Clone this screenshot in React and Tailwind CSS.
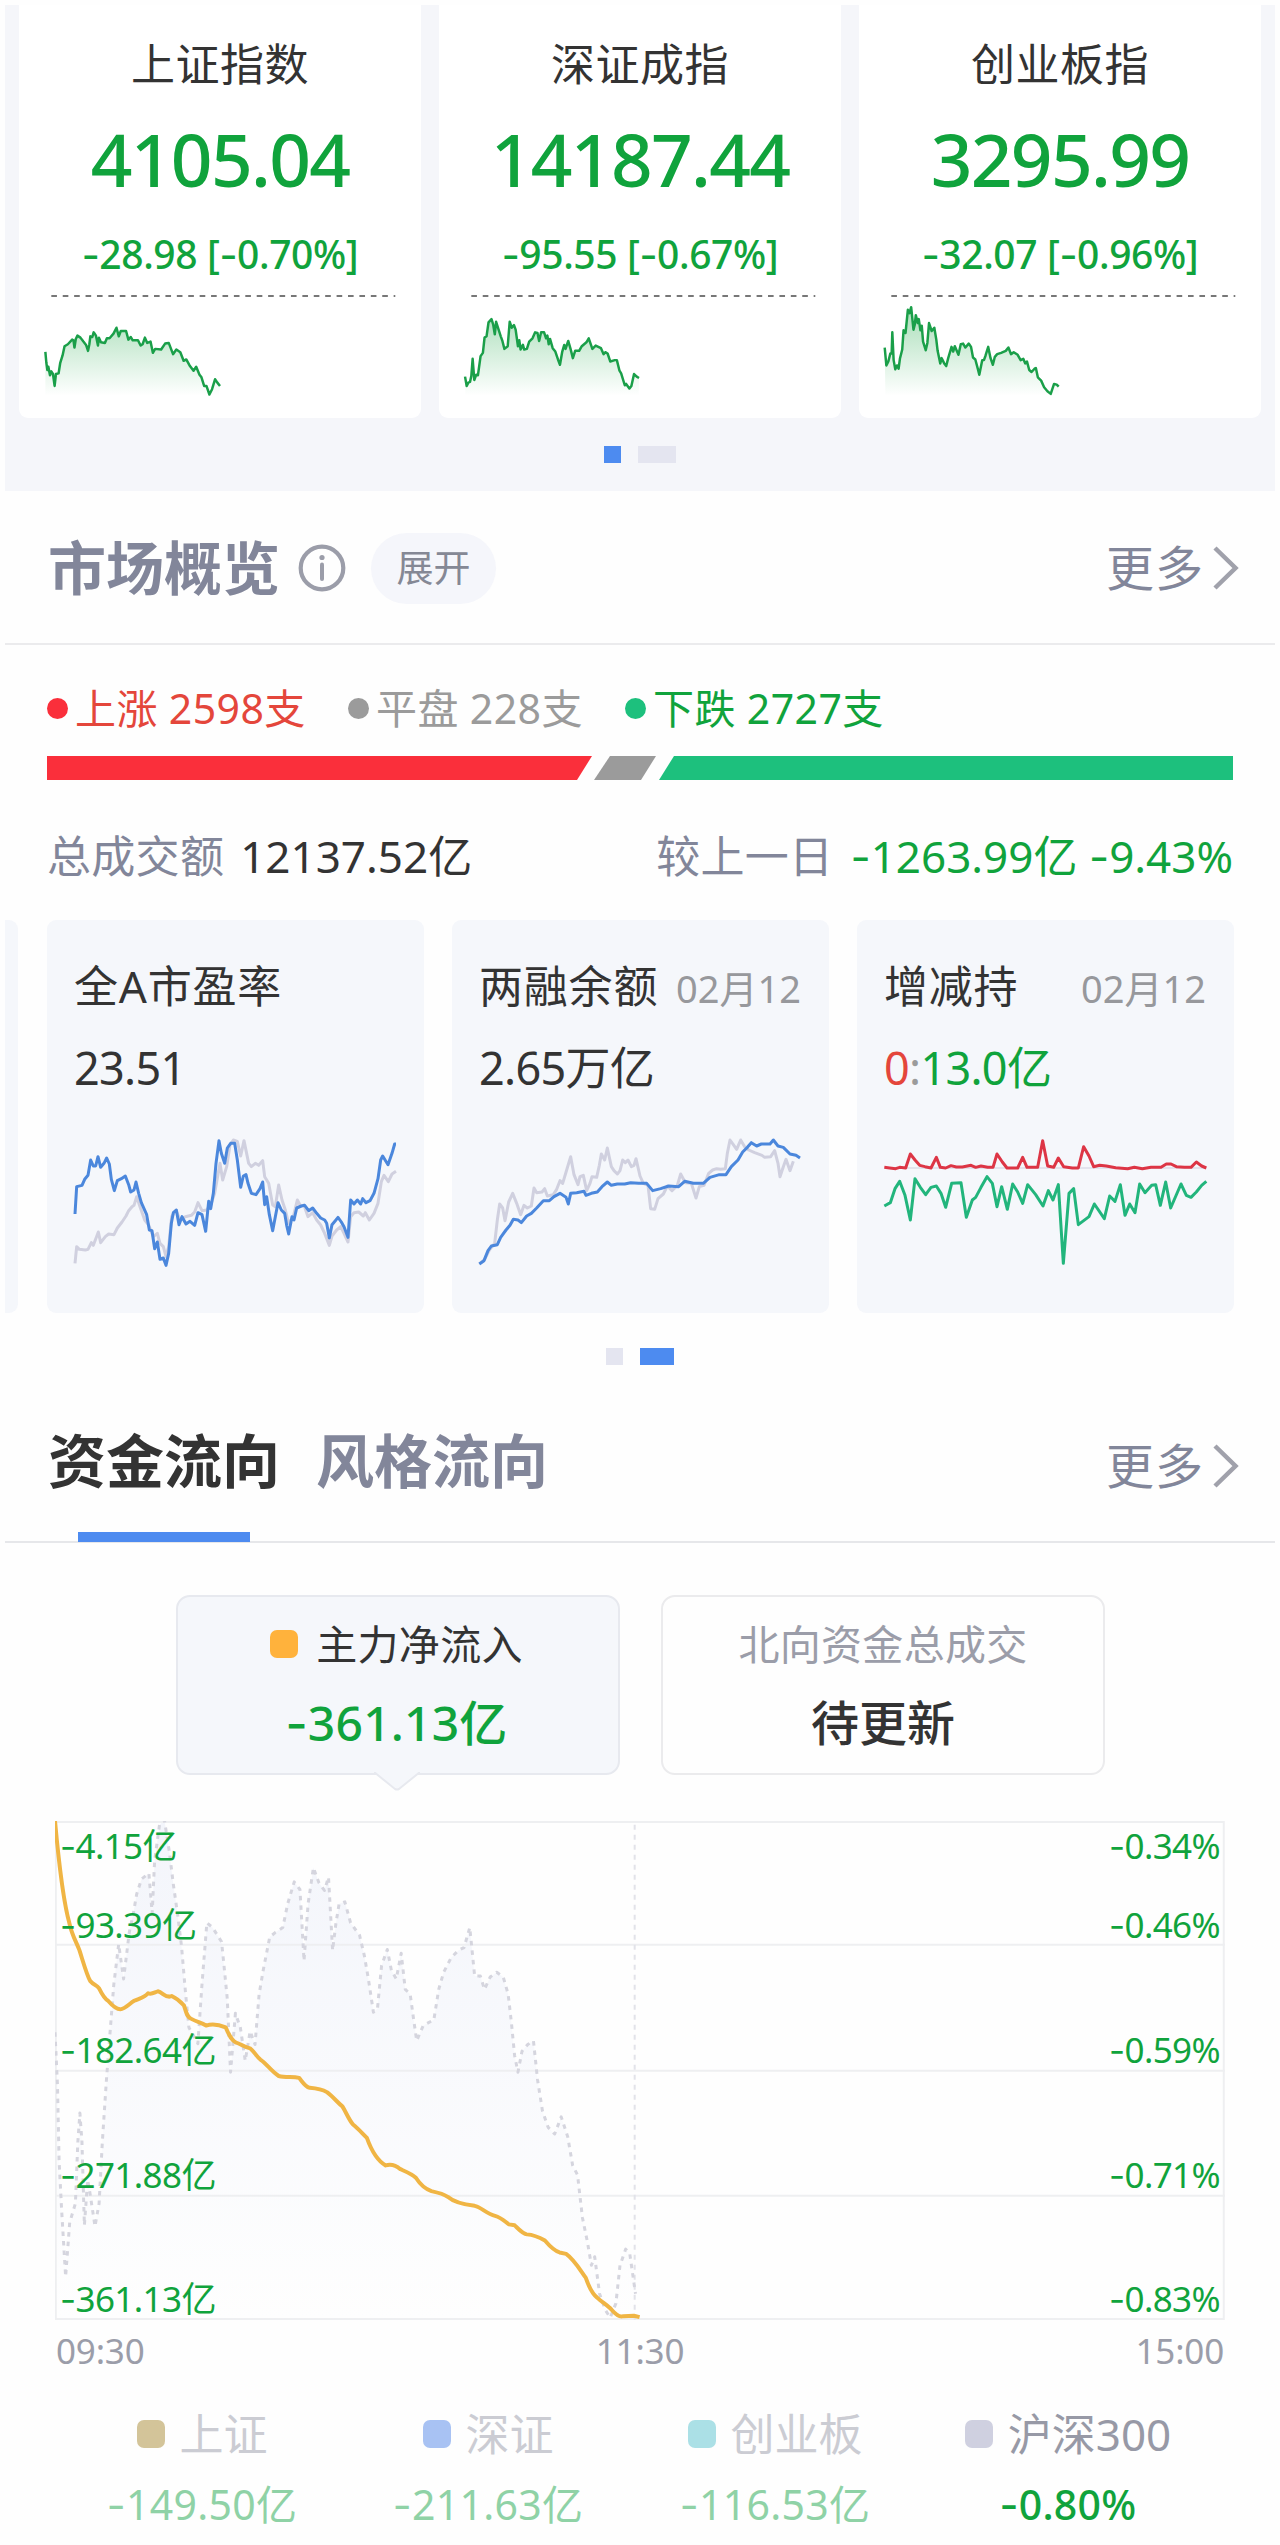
import React from 'react';

const INDEXES = [
  {
    name: '上证指数',
    price: '4105.04',
    change: '-28.98 [-0.70%]',
    line: '132,1057 135,1090 138,1112 141,1102 146,1128 150,1116 155,1124 160,1160 164,1124 172,1122 177,1090 184,1068 190,1040 200,1034 213,1020 217,1022 220,1044 224,1018 229,1008 238,1014 247,1026 255,1036 261,1054 265,1034 268,1010 274,1012 278,998 285,1008 291,1038 294,1014 300,1028 312,1030 318,1016 326,1016 338,1002 347,984 354,1010 360,994 376,994 383,1020 390,1012 396,1022 412,1022 420,1038 426,1034 433,1014 440,1030 450,1026 457,1060 464,1048 482,1050 494,1032 505,1030 518,1064 528,1050 540,1058 550,1084 558,1080 568,1098 580,1114 588,1102 598,1126 604,1134 612,1160 619,1160 628,1186 636,1170 645,1140 652,1150 660,1160',
  },
  {
    name: '深证成指',
    price: '14187.44',
    change: '-95.55 [-0.67%]',
    line: '131,1132 136,1160 141,1150 146,1148 150,1130 154,1078 159,1142 165,1126 170,1128 178,1070 185,1060 190,1014 196,1010 202,968 211,958 216,974 221,1004 225,966 232,988 239,1010 244,1024 250,1048 260,1040 266,966 272,984 279,976 284,990 291,1040 295,1022 299,1050 306,1036 310,1050 318,1048 325,1026 335,1016 343,998 350,1000 355,1024 361,998 370,998 376,1016 380,1008 384,1034 388,1018 396,1046 404,1056 412,1080 418,1096 425,1056 431,1036 435,1048 443,1024 450,1048 457,1076 464,1054 476,1054 484,1040 498,1028 505,1016 516,1048 526,1038 542,1046 550,1064 555,1058 562,1062 570,1086 584,1082 590,1082 598,1114 603,1122 614,1158 618,1154 628,1168 634,1160 642,1124 650,1132 657,1136',
  },
  {
    name: '创业板指',
    price: '3295.99',
    change: '-32.07 [-0.96%]',
    line: '130,1044 135,1098 141,1086 147,1062 151,1062 153,998 157,1082 162,1110 167,1098 172,1108 176,1078 183,1050 187,992 193,1000 200,930 205,940 210,922 217,990 221,974 224,946 230,970 233,958 238,992 242,978 246,1026 254,1052 259,1030 264,970 272,994 280,984 286,1020 290,1054 298,1092 302,1076 310,1092 316,1100 322,1076 332,1042 337,1056 342,1040 353,1066 360,1034 367,1032 374,1044 384,1032 391,1042 397,1074 404,1080 412,1110 416,1126 425,1082 430,1082 435,1068 443,1042 450,1076 457,1096 463,1072 470,1064 482,1060 496,1054 504,1044 512,1064 520,1058 532,1066 541,1082 549,1078 555,1092 560,1086 567,1112 574,1118 583,1108 587,1106 593,1134 603,1144 612,1164 622,1176 632,1184 642,1154 650,1156 656,1162',
  },
];

const PE_GRAY =
  '225,1090 230,1040 238,1048 256,1050 264,1048 274,1028 280,1036 295,996 302,1028 316,1010 326,1002 342,1004 352,984 366,966 378,948 386,932 396,920 402,916 410,890 420,920 434,960 446,975 460,1010 472,1000 480,1030 490,1040 498,1070 506,1040 515,950 528,930 540,960 556,950 574,946 584,936 594,908 606,932 620,930 632,915 644,880 652,835 660,790 668,840 680,800 690,735 700,720 712,724 722,768 732,722 746,790 754,800 766,790 776,796 788,782 794,830 806,850 818,915 826,920 836,855 846,900 856,930 866,970 880,950 892,900 902,918 912,916 924,950 938,938 950,960 962,975 974,1000 988,1036 996,1008 1010,990 1022,980 1032,1000 1044,1026 1052,950 1062,938 1076,936 1090,948 1096,938 1108,960 1122,940 1134,910 1144,845 1152,826 1165,845 1176,822 1188,814';
const PE_BLUE =
  '225,942 230,860 246,856 254,838 264,826 272,780 280,798 287,798 294,770 302,802 312,790 320,774 328,792 334,838 343,872 352,842 364,836 376,828 386,854 392,876 402,870 408,846 416,880 424,908 440,944 448,990 456,992 464,1046 472,1026 480,1078 490,1074 498,1096 506,1060 514,970 520,938 529,930 537,974 546,950 558,972 570,964 584,976 594,938 606,944 617,994 626,904 632,926 640,880 648,790 657,722 664,760 674,790 682,744 692,730 704,730 712,780 722,862 730,828 738,824 744,850 754,880 768,884 780,866 788,846 794,914 800,890 808,944 818,992 826,950 834,908 844,930 854,940 860,976 866,1002 876,950 882,960 890,924 904,918 914,916 926,932 938,924 950,940 962,954 974,960 980,970 988,1014 996,974 1006,962 1014,952 1024,966 1032,980 1044,1012 1052,900 1062,912 1072,900 1082,912 1088,896 1098,908 1110,902 1122,880 1134,836 1142,780 1148,768 1164,794 1176,760 1184,732 1188,732';
const MARGIN_GRAY =
  '148,1092 164,1078 178,1050 194,1030 202,960 209,912 218,924 225,962 236,906 248,880 260,910 272,944 282,916 292,924 304,918 312,864 320,878 336,876 344,866 352,888 370,884 380,868 390,842 398,850 410,810 422,770 432,824 444,854 450,830 460,826 470,872 480,850 486,830 500,832 508,796 514,762 524,780 532,744 544,800 552,812 562,822 570,812 578,780 586,788 594,780 604,800 612,796 618,776 630,828 640,850 654,856 662,926 674,928 684,896 700,882 712,858 726,872 742,856 752,822 766,848 784,850 798,894 808,860 822,856 836,820 848,810 860,806 872,808 886,806 892,760 900,720 910,734 920,748 932,720 944,740 956,750 974,758 996,766 1004,772 1022,770 1034,752 1044,790 1050,830 1060,800 1068,778 1080,812 1090,784';
const MARGIN_BLUE =
  '148,1092 162,1082 174,1052 184,1038 202,1034 212,1012 228,990 240,976 250,958 264,960 274,968 290,948 304,940 320,924 340,902 358,902 372,890 390,880 408,892 415,912 422,880 440,878 462,874 468,886 484,880 502,876 516,860 532,846 544,856 562,852 584,852 602,848 626,850 650,850 668,872 692,866 716,858 746,860 764,844 790,850 820,850 840,832 868,824 888,824 904,800 924,780 938,756 952,742 964,728 980,738 994,732 1020,732 1030,720 1044,738 1060,742 1080,762 1098,766 1110,774';
const HOLD_RED =
  '130,802 146,804 164,806 176,802 194,804 208,762 222,780 236,796 252,800 270,804 286,772 298,802 314,804 330,797 346,801 364,801 390,796 404,802 420,798 440,802 456,802 468,762 484,786 498,804 530,804 545,772 558,802 590,802 605,722 620,798 638,802 652,774 668,800 694,804 712,804 728,740 744,768 758,800 776,796 796,798 824,803 860,806 880,802 904,806 930,802 960,802 976,792 990,792 1006,800 1030,802 1050,802 1066,786 1082,798 1096,804';
const HOLD_GREEN =
  '130,918 148,908 162,866 176,844 192,886 208,960 222,836 238,862 254,884 270,862 286,858 300,880 314,922 332,850 360,848 376,952 394,900 404,892 420,862 438,830 454,850 468,920 482,860 499,928 515,852 530,876 545,910 560,854 584,884 606,918 622,872 636,900 652,854 667,1090 684,880 698,866 712,974 744,950 760,912 790,956 806,888 822,904 838,854 852,946 866,912 882,938 896,852 912,878 932,856 944,854 958,916 974,846 989,924 1020,852 1036,886 1050,892 1066,876 1082,856 1096,844';

const FLOW_LINE =
  'M62,46 C72,140 84,220 97,260 C103,285 114,300 122,318 C132,345 140,370 148,382 C158,392 164,390 170,398 C178,412 184,420 192,424 C202,434 212,442 222,442 C234,441 244,430 256,424 C268,419 280,418 290,408 C298,412 306,406 314,404 C326,406 334,420 348,414 C358,418 370,426 378,434 C384,450 386,460 396,462 C408,468 420,470 432,476 C446,472 464,474 480,480 C488,494 492,506 506,512 C516,514 526,522 540,524 C550,530 556,542 566,548 C580,556 592,572 610,582 C626,586 644,583 660,586 C668,594 674,604 686,607 C700,608 716,610 728,616 C744,626 754,638 766,646 C776,660 782,674 792,684 C804,692 814,702 826,712 C836,736 848,758 872,770 C888,766 900,772 908,778 C924,784 936,788 946,796 C958,812 970,820 984,824 C1000,827 1014,830 1024,836 C1040,848 1060,852 1090,855 C1106,858 1120,872 1140,876 C1156,880 1164,888 1174,894 L1188,896 C1200,906 1208,914 1218,915 C1236,916 1250,922 1262,928 C1276,942 1286,950 1298,953 L1314,956 C1334,968 1350,992 1362,1006 C1370,1026 1378,1040 1390,1048 C1402,1058 1416,1064 1426,1074 C1436,1084 1444,1090 1454,1087 L1480,1086 L1494,1089';
const HS300 =
  '62,490 68,600 72,760 78,860 88,1004 98,890 112,850 118,720 123,660 128,720 134,896 142,800 148,830 160,898 170,850 178,720 188,590 196,500 206,390 218,305 230,378 244,280 254,240 262,200 274,168 292,156 300,240 306,130 318,54 330,44 342,110 352,180 362,240 372,310 382,410 390,480 412,514 422,390 434,260 448,270 470,300 476,350 484,420 492,574 504,450 516,480 528,550 540,488 552,516 562,410 572,360 588,290 602,280 620,270 632,220 648,174 662,190 672,340 682,220 695,144 708,175 722,192 732,164 742,318 750,262 758,220 772,216 786,260 808,286 820,330 830,380 842,448 852,440 862,350 876,316 886,360 898,378 910,324 920,400 932,410 940,460 948,508 964,476 990,464 1002,400 1014,364 1032,334 1050,318 1064,312 1078,270 1090,372 1104,372 1114,400 1128,374 1144,364 1160,374 1172,410 1180,470 1188,540 1196,574 1206,530 1220,516 1234,508 1244,590 1256,655 1270,690 1286,704 1302,668 1318,710 1330,770 1342,790 1354,880 1366,930 1376,980 1384,962 1396,1040 1410,1074 1422,1090 1436,1060 1446,980 1460,946 1470,956 1484,1040';

const AXIS_TICKS = [
  { flow: '-4.15亿', pct: '-0.34%', pos: 'pt-[1px]' },
  { flow: '-93.39亿', pct: '-0.46%', pos: 'mt-[32px]' },
  { flow: '-182.64亿', pct: '-0.59%', pos: 'mt-[77px]' },
  { flow: '-271.88亿', pct: '-0.71%', pos: 'mt-[77px]' },
  { flow: '-361.13亿', pct: '-0.83%', pos: 'mt-[76px]' },
];

const SERIES = [
  { name: '上证', value: '-149.50亿', swatch: 'bg-[#d3c499]', off: true },
  { name: '深证', value: '-211.63亿', swatch: 'bg-[#a8c2f3]', off: true },
  { name: '创业板', value: '-116.53亿', swatch: 'bg-[#abe0e6]', off: true },
  { name: '沪深300', value: '-0.80%', swatch: 'bg-[#cfd0e0]', off: false },
];

// Noto's hyphen is too short for a minus sign, Inter's has the right width
function Num({ children }) {
  return (
    <span>
      {children.split(/(-)/).map((part, i) =>
        part === '-' ? (
          <span key={i} className="font-['Inter']">-</span>
        ) : (
          part
        )
      )}
    </span>
  );
}

function Chevron() {
  return (
    <svg width="26" height="44" viewBox="0 0 26 44" fill="none" stroke="#a0a1ab" strokeWidth="4.5">
      <path d="M2 2 L22.5 22 L2 42" />
    </svg>
  );
}

function More() {
  return (
    <div className="flex items-center gap-[9px] text-[48px] leading-[60px] tracking-[1px] text-[#82869a]">
      更多
      <Chevron />
    </div>
  );
}

function IndexCard({ item, id }) {
  return (
    <div className="flex h-[413px] w-[402px] flex-col items-center rounded-b-[9px] bg-white pt-[29px] text-[#10a33c]">
      <div className="h-[60px] text-[44px] leading-[60px] tracking-[0.5px] text-[#333]">{item.name}</div>
      <div className="mt-[25px] h-[80px] text-[73px] font-medium leading-[80px] tracking-[-1.7px]">{item.price}</div>
      <div className="mt-[27px] h-[56px] whitespace-pre text-[39px] font-medium leading-[56px] tracking-[-0.4px]">
        <Num>{item.change}</Num>
      </div>
      <svg className="mt-[8px]" width="402" height="129" viewBox="57 870 1206 387" fill="none">
        <defs>
          <linearGradient id={id} gradientUnits="userSpaceOnUse" x1="0" y1="940" x2="0" y2="1190">
            <stop offset="0" stopColor="#10a33c" stopOpacity="0.34" />
            <stop offset="1" stopColor="#10a33c" stopOpacity="0" />
          </linearGradient>
        </defs>
        <path d="M150 888 H1190" stroke="#777" strokeWidth="6" strokeDasharray="17 17.5" />
        <polygon points={`132,1190 ${item.line} 656,1190`} fill={`url(#${id})`} />
        <polyline points={item.line} stroke="#1a9f49" strokeWidth="7.5" strokeLinejoin="round" />
      </svg>
    </div>
  );
}

function StatCard({ title, date, children, chart, viewBox }) {
  return (
    <div className="flex h-[393px] w-[377px] shrink-0 flex-col rounded-[9px] bg-[#f5f7fb] pt-[36px]">
      <div className="flex h-[60px] items-center justify-between whitespace-nowrap pl-[27px] pr-[28px] text-[#333]">
        <span className="text-[44px] leading-[60px] tracking-[0.8px]">{title}</span>
        <span className="mt-[4px] text-[38px] leading-[54px] text-[#97989c]">{date}</span>
      </div>
      <div className="mt-[22px] h-[60px] whitespace-nowrap pl-[27px] text-[45px] leading-[60px] tracking-[-0.7px] text-[#333]">{children}</div>
      <svg className="mt-[22px]" width="377" height="160" viewBox={viewBox} fill="none" strokeWidth="9" strokeLinejoin="round">
        {chart}
      </svg>
    </div>
  );
}

function App() {
  return (
    <div className="h-[2545px] w-[1280px] overflow-hidden bg-[#fefefe] px-[5px] pt-[5px] font-['Noto_Sans','Noto_Sans_CJK_SC',sans-serif]">
      {/* Index cards */}
      <section className="h-[486px] bg-[#f5f6fa]">
        <div className="flex gap-[18px] pl-[14px]">
          {INDEXES.map((item, i) => (
            <IndexCard key={item.name} item={item} id={`fade-${i}`} />
          ))}
        </div>
        <div className="mt-[28px] flex justify-center gap-[17px]">
          <span className="h-[17px] w-[17px] bg-[#4d8bf0]" />
          <span className="h-[17px] w-[38px] bg-[#e4e5f0]" />
        </div>
      </section>

      {/* Market overview */}
      <section className="h-[911px]">
        <div className="flex h-[154px] items-center border-b-2 border-[#ebebed] pl-[43px] pr-[36px] pt-[2px]">
          <h2 className="text-[58px] font-bold leading-[80px] text-[#82869a]">市场概览</h2>
          <svg className="ml-[18px]" width="48" height="48" viewBox="0 0 48 48" fill="none" stroke="#9b9da9">
            <circle cx="24" cy="24" r="21.3" strokeWidth="4.2" />
            <path d="M24 20.5 V35" strokeWidth="4" strokeLinecap="round" />
            <circle cx="24" cy="13.5" r="2.6" fill="#9b9da9" stroke="none" />
          </svg>
          <span className="ml-[25px] flex h-[71px] w-[125px] items-center justify-center rounded-full bg-[#f5f6fb] text-[37px] text-[#858895]">展开</span>
          <div className="ml-auto">
            <More />
          </div>
        </div>

        <div className="mt-[35px] flex h-[56px] items-center whitespace-pre pl-[42px] text-[41px] leading-[56px] tracking-[0.4px]">
          <span className="mr-[7px] h-[21px] w-[21px] rounded-full bg-[#fa2f3b]" />
          <span className="w-[273px] text-[#e4463b]">上涨 2598支</span>
          <span className="mr-[7px] h-[21px] w-[21px] rounded-full bg-[#9b9b9b]" />
          <span className="w-[249px] text-[#9b9b9b]">平盘 228支</span>
          <span className="mr-[7px] h-[21px] w-[21px] rounded-full bg-[#1dc07d]" />
          <span className="text-[#10a33c]">下跌 2727支</span>
        </div>

        <svg className="ml-[42px] mt-[20px]" width="1186" height="24" viewBox="0 0 1186 24">
          <polygon points="0,0 545,0 530,24 0,24" fill="#fa2f3b" />
          <polygon points="563,0 609,0 594,24 547,24" fill="#9b9b9b" />
          <polygon points="627,0 1186,0 1186,24 612,24" fill="#1dc07d" />
        </svg>

        <div className="mt-[46px] flex h-[60px] justify-between pl-[42px] pr-[42px] text-[44px] leading-[60px]">
          <div className="flex gap-[16px] tracking-[0.3px] text-[#82869a]">
            总成交额<span className="tracking-normal text-[#333]">12137.52亿</span>
          </div>
          <div className="flex gap-[17px] tracking-[0.3px] text-[#82869a]">
            较上一日
            <span className="tracking-normal text-[#10a33c]">
              <Num>-1263.99亿 -9.43%</Num>
            </span>
          </div>
        </div>

        <div className="mt-[34px] flex gap-[28px]">
          <div className="mr-[1px] h-[393px] w-[13px] shrink-0 rounded-r-[9px] bg-[#f5f7fb]" />
          <StatCard
            title="全A市盈率"
            viewBox="141 660 1131 480"
            chart={
              <>
                <polyline points={PE_GRAY} stroke="#d0d0df" />
                <polyline points={PE_BLUE} stroke="#4b87dc" />
              </>
            }
          >
            23.51
          </StatCard>
          <StatCard
            title="两融余额"
            date="02月12"
            viewBox="66 660 1131 480"
            chart={
              <>
                <polyline points={MARGIN_GRAY} stroke="#d0d0df" />
                <polyline points={MARGIN_BLUE} stroke="#4b87dc" />
              </>
            }
          >
            2.65万亿
          </StatCard>
          <StatCard
            title="增减持"
            date="02月12"
            viewBox="48 660 1131 480"
            chart={
              <>
                <path d="M130 804 H1096" stroke="#dcdce8" strokeWidth="5" />
                <polyline points={HOLD_RED} stroke="#dd3545" />
                <polyline points={HOLD_GREEN} stroke="#22b57c" />
              </>
            }
          >
            <span className="text-[#e4463b]">0</span>
            <span className="text-[#9b9b9b]">:</span>
            <span className="text-[#10a33c]">13.0亿</span>
          </StatCard>
        </div>

        <div className="mt-[35px] flex justify-center gap-[17px]">
          <span className="h-[17px] w-[17px] bg-[#e4e5f0]" />
          <span className="h-[17px] w-[34px] bg-[#4d8bf0]" />
        </div>
      </section>

      {/* Fund flow */}
      <section>
        <div className="flex h-[141px] items-start justify-between border-b-2 border-[#e6e7ea] pl-[43px] pr-[36px]">
          <div className="flex gap-[36px] pt-[19px] text-[58px] font-bold leading-[80px]">
            <div className="h-[120px]">
              <span className="text-[#333]">资金流向</span>
              <div className="ml-[30px] mt-[31px] h-[10px] w-[172px] bg-[#4d8bf0]" />
            </div>
            <span className="text-[#82869a]">风格流向</span>
          </div>
          <div className="pt-[34px]">
            <More />
          </div>
        </div>

        <div className="mt-[52px] flex gap-[41px] pl-[171px]">
          <div className="relative flex h-[180px] w-[444px] flex-col items-center rounded-[14px] border-2 border-[#e7e9ef] bg-[#f5f7fb] pr-[3px] pt-[19px]">
            <div className="flex h-[56px] items-center gap-[18px] text-[41px] leading-[56px] tracking-[0.3px] text-[#333]">
              <span className="h-[28px] w-[28px] rounded-[7px] bg-[#ffb23c]" />
              主力净流入
            </div>
            <div className="mt-[21px] h-[60px] text-[48px] font-medium leading-[60px] tracking-[0.2px] text-[#10a33c]">
              <Num>-361.13亿</Num>
            </div>
            <svg className="absolute -bottom-[18px] left-[196px]" width="46" height="19" viewBox="0 0 46 19">
              <path d="M0 0 L21 17 Q23 18 25 17 L46 0" fill="#f5f7fb" stroke="#e7e9ef" strokeWidth="2" />
            </svg>
          </div>
          <div className="flex h-[180px] w-[444px] flex-col items-center rounded-[14px] border-2 border-[#ebebed] pt-[19px]">
            <div className="h-[56px] text-[41px] leading-[56px] tracking-[0.3px] text-[#9b9da9]">北向资金总成交</div>
            <div className="mt-[21px] h-[60px] text-[48px] font-medium leading-[60px] text-[#333]">待更新</div>
          </div>
        </div>

        <div className="relative ml-[50px] mt-[46px] h-[499px] w-[1170px]">
          <svg width="1170" height="499" viewBox="62 46 2866 1049" preserveAspectRatio="none" fill="none">
            <defs>
              <linearGradient id="flow-fade" x1="0" y1="0" x2="0" y2="1">
                <stop offset="0" stopColor="#f3f5fb" />
                <stop offset="1" stopColor="#fefefe" />
              </linearGradient>
            </defs>
            <polygon points={`62,1095 ${HS300} 1484,1095`} fill="url(#flow-fade)" />
            <g stroke="#eeeff1" strokeWidth="2">
              <path d="M62 306 H2928 M62 571 H2928 M62 834 H2928" vectorEffect="non-scaling-stroke" />
              <rect x="64" y="48" width="2861" height="1045" vectorEffect="non-scaling-stroke" />
              <path d="M1482 54 V1095" stroke="#e2e3e9" strokeDasharray="5 5" vectorEffect="non-scaling-stroke" />
            </g>
            <polyline points={HS300} stroke="#d5d5de" strokeWidth="3" strokeDasharray="4.5 5" strokeLinejoin="round" vectorEffect="non-scaling-stroke" />
            <path d={FLOW_LINE} stroke="#f0b544" strokeWidth="4" strokeLinejoin="round" vectorEffect="non-scaling-stroke" />
          </svg>
          {/* axis labels lie over the plot */}
          <div className="absolute inset-0 pl-[5px] pr-[5px] text-[35px] leading-[48px] text-[#10a33c]">
            {AXIS_TICKS.map((tick) => (
              <div key={tick.flow} className={`flex h-[48px] justify-between tracking-[-0.6px] ${tick.pos}`}>
                <Num>{tick.flow}</Num>
                <Num>{tick.pct}</Num>
              </div>
            ))}
          </div>
        </div>

        <div className="mx-[51px] mt-[7px] flex h-[48px] justify-between text-[35px] leading-[48px] tracking-[-0.2px] text-[#9b9da9]">
          <span>09:30</span>
          <span>11:30</span>
          <span>15:00</span>
        </div>

        <div className="mt-[29px] grid grid-cols-[282px_290px_284px_302px] pl-[56px]">
          {SERIES.map((s) => (
            <div key={s.name} className="flex flex-col items-center">
              <div className={`flex h-[60px] items-center gap-[15px] text-[44px] leading-[60px] ${s.off ? 'text-[#cbccd3]' : 'text-[#9799a6]'}`}>
                <span className={`h-[28px] w-[28px] rounded-[7px] ${s.swatch}`} />
                {s.name}
              </div>
              <div className={`mt-[12px] h-[56px] text-[41px] leading-[56px] tracking-[0.3px] ${s.off ? 'text-[#8fd2a6]' : 'font-medium text-[#10a33c]'}`}>
                <Num>{s.value}</Num>
              </div>
            </div>
          ))}
        </div>
      </section>
    </div>
  );
}

export default App;
